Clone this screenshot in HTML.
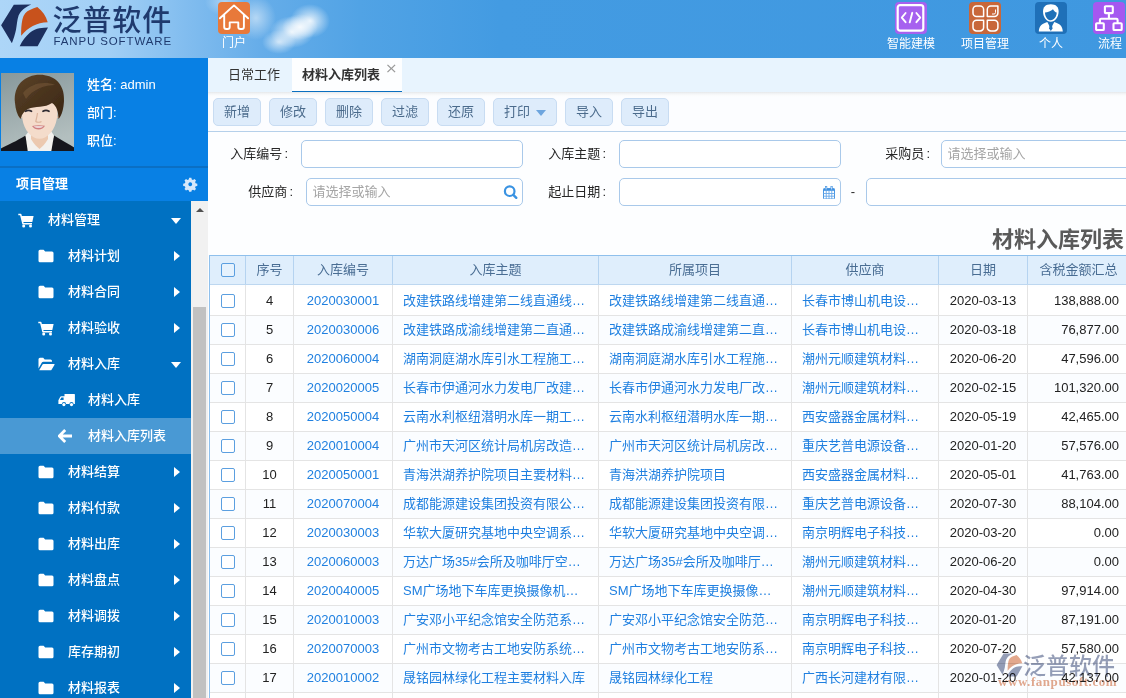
<!DOCTYPE html>
<html lang="zh-CN">
<head>
<meta charset="utf-8">
<title>材料入库列表</title>
<style>
*{box-sizing:border-box;margin:0;padding:0}
html,body{width:1126px;height:698px;overflow:hidden;background:#fdfeff;font-family:"Liberation Sans","Noto Sans CJK SC",sans-serif;font-size:13px;color:#333}
.abs{position:absolute}
#hdr{position:absolute;left:0;top:0;width:1126px;height:58px;background:linear-gradient(90deg,#add6f8 0,#a2cff5 110px,#82bdef 185px,#66ade9 260px,#51a3e5 360px,#439be2 500px,#3f98e0 100%);overflow:hidden}
#hdr .cloud{position:absolute;border-radius:50%;background:radial-gradient(closest-side,rgba(255,255,255,.85),rgba(255,255,255,0));}
.logo-cn{position:absolute;left:52.500px;top:2.500px;font-size:29px;line-height:36px;font-weight:500;color:#1f3a6e;letter-spacing:0.900px;white-space:nowrap}
.logo-en{position:absolute;left:53.500px;top:35px;font-size:11.5px;line-height:13px;color:#1f3a6e;letter-spacing:0.87px;white-space:nowrap}
.hicon{position:absolute;top:2px;width:32px;height:32px;border-radius:4px}
.hlbl{position:absolute;top:35.5px;height:15px;line-height:15px;font-size:12px;color:#fff;text-align:center;white-space:nowrap}
#side{position:absolute;left:0;top:58px;width:208px;height:640px;background:#0880e4}
#side .info{position:absolute;left:87px;font-weight:500;color:#fff;font-size:13px;line-height:16px;white-space:nowrap}
#menuhdr{position:absolute;left:0;top:108px;width:208px;height:35px;border-top:2px solid #0a6fc4;background:#0880e4}
#menuhdr b{position:absolute;left:16px;top:7px;font-size:13px;line-height:18px;color:#fff}
#menu{position:absolute;left:0;top:143px;width:191px;height:497px;background:#0071c2;overflow:hidden}
.mi{position:absolute;left:0;width:191px;height:36px;font-weight:500;color:#fff;font-size:13px;line-height:36px;white-space:nowrap}
.mi.sel{background:#4999d4}
.mi span{position:absolute;top:0}
.mi svg{position:absolute}
.arr-r{position:absolute;left:173.500px;top:13px;width:0;height:0;border-left:6.500px solid #fff;border-top:5px solid transparent;border-bottom:5px solid transparent}
.arr-d{position:absolute;left:171px;top:16px;width:0;height:0;border-top:6px solid #fff;border-left:5px solid transparent;border-right:5px solid transparent}
#sscroll{position:absolute;left:191px;top:143px;width:17px;height:497px;background:#f1f1f1}
#sscroll i{position:absolute;left:2px;top:106px;width:13px;height:400px;background:#c1c1c1}
#sscroll u{position:absolute;left:5px;top:7px;width:0;height:0;border-bottom:4px solid #505050;border-left:4px solid transparent;border-right:4px solid transparent}
#tabs{position:absolute;left:208px;top:58px;width:918px;height:34px;background:#e8f4fe}
#tabs .t1{position:absolute;left:20px;top:7.800px;font-size:13px;line-height:18px;color:#333}
#tabs .t2{position:absolute;left:84px;top:0;width:110px;height:34px;background:#fdfeff;border-bottom:1px solid #0a6fc0}
#tabs .t2 b{position:absolute;left:10px;top:7.800px;font-size:13px;line-height:18px;color:#333;white-space:nowrap}
#tabs .t2 em{position:absolute;left:93px;top:3.200px;font-style:normal;font-size:15px;line-height:16px;color:#999;font-family:"DejaVu Sans",sans-serif;font-weight:normal;transform:scale(1,.9)}
#tool{position:absolute;left:208px;top:92px;width:918px;height:40px;background:linear-gradient(180deg,#e6e8ea 0,#f1f3f5 1.500px,#f9fafb 3px,#fcfdff 5px,#fcfdff 100%);border-bottom:1px solid #b5d0ea}
.btn{position:absolute;top:6px;height:28px;width:48px;border:1px solid #c8dcf2;border-radius:5px;background:#deecfb;color:#4b6b8c;font-size:13px;line-height:26px;text-align:center;white-space:nowrap}
#form{position:absolute;left:208px;top:132px;width:918px;height:566px;background:#fdfeff}
.lbl i{font-style:normal;margin-left:2px}
.lbl{position:absolute;font-size:13px;line-height:18px;color:#262626;text-align:right;white-space:nowrap}
.inp{position:absolute;height:28px;border:1px solid #a9c9ea;border-radius:5px;background:#fff;font-size:13px;line-height:26px;color:#a5a5a5;padding-left:5.5px;white-space:nowrap;overflow:hidden}
#title{position:absolute;left:780px;top:222.600px;width:344px;text-align:right;font-size:22px;line-height:34px;font-weight:bold;color:#5a5a5a;white-space:nowrap}
#grid{position:absolute;left:209px;top:255px;width:930px;height:443px;border-left:1px solid #8fc0ec}
#ghead{position:absolute;left:0;top:0;width:930px;height:30px;background:#dfeefc;border-top:1px solid #8fc0ec;border-bottom:1px solid #bdd7f0}
.hc{position:absolute;top:0;height:28px;line-height:28px;text-align:center;color:#496d93;font-size:13px;border-right:1px solid #b5d3f0;white-space:nowrap}
.row{position:absolute;left:0;width:930px;height:29px;border-bottom:1px solid #e4e4e4;background:#fff}
.row.alt{background:#fbfdff}
.c{position:absolute;top:0;height:28px;line-height:27.500px;color:#222;border-right:1px solid #e4e4e4;font-size:13px;white-space:nowrap;overflow:hidden}
.c.ctr{text-align:center}
.c.lnk{color:#2080e0;padding-left:10px}
.c.lk{color:#2080e0}
.c.num{text-align:right;padding-right:10px}
.vl{position:absolute;top:30px;width:1px;height:2px;background:#e4e4e4}
.cb{position:absolute;left:11px;top:7px;width:14px;height:14px;border:1px solid #5b9fe0;border-radius:2px;background:#fff}
</style>
</head>
<body>
<div id="hdr">
  <div class="cloud" style="left:262px;top:30px;width:34px;height:24px;opacity:.8"></div>
  <div class="cloud" style="left:270px;top:16px;width:44px;height:32px"></div>
  <div class="cloud" style="left:290px;top:4px;width:40px;height:34px"></div>
  <div class="cloud" style="left:282px;top:14px;width:36px;height:26px"></div>
  <div class="cloud" style="left:236px;top:-4px;width:40px;height:44px;opacity:.6"></div>
  <div class="cloud" style="left:205px;top:-12px;width:40px;height:28px;opacity:.5"></div>
  <svg class="abs" style="left:0;top:0" width="52" height="52" viewBox="0 0 52 52">
    <path d="M1.100 25.300 L13.800 4.700 L31.300 4.500 C25 7 20.500 11 18.600 15.600 C17 20 17 25 16 29.800 C15 34.500 13.500 39 11.900 43.200 Z" fill="#1c2f5e"/>
    <path d="M37.300 7.100 C42.500 11 46 16 47.700 22.200 C37 22.500 27.500 27.500 21.200 35.800 C21 30 21.300 24.500 22.400 19.400 C23.500 14.500 26.500 11.500 29.800 10.100 C32.500 8.800 35 7.800 37.300 7.100 Z" fill="#c8521c"/>
    <path d="M48 27.600 L37.600 46.200 L19.700 46.200 C22.500 40.500 26 36 29.800 32.800 C33 30 36.500 28.600 39.500 28.200 C42.500 27.800 45.500 27.600 48 27.600 Z" fill="#1c2f5e"/>
  </svg>
  <div class="logo-cn">泛普软件</div>
  <div class="logo-en">FANPU SOFTWARE</div>

  <div class="hicon" style="left:218px;background:#e8793a"></div>
  <svg class="abs" style="left:218px;top:2px" width="32" height="32" viewBox="0 0 32 32"><path d="M1.900 16.300 L16 3.400 L30.100 16.300 M6.200 12.700 V25 a2 2 0 0 0 2 2 H9.700 a2 2 0 0 0 2 -2 V20.400 H20.300 V25 a2 2 0 0 0 2 2 H23.900 a2 2 0 0 0 2 -2 V12.700" fill="none" stroke="#fff" stroke-width="1.900" stroke-linejoin="round" stroke-linecap="round"/></svg>
  <div class="hlbl" style="left:214px;width:40px">门户</div>

  <div class="hicon" style="left:895px;background:#a661ef"></div>
  <svg class="abs" style="left:895px;top:2px" width="32" height="32" viewBox="0 0 32 32"><rect x="2.700" y="3.100" width="25.600" height="25.600" rx="2.500" fill="none" stroke="#fff" stroke-width="2.200"/><path d="M10.600 11 L6.800 15.600 L10.600 20.200 M21.400 11 L25.200 15.600 L21.400 20.200 M17.300 10.800 L14.700 20.400" fill="none" stroke="#fff" stroke-width="1.900" stroke-linecap="round" stroke-linejoin="round"/></svg>
  <div class="hlbl" style="left:881px;width:60px;top:36.5px">智能建模</div>

  <div class="hicon" style="left:969px;background:#c8673a"></div>
  <svg class="abs" style="left:969px;top:2px" width="32" height="32" viewBox="0 0 32 32"><g fill="none" stroke="#fff" stroke-width="1.500" stroke-linejoin="round"><path d="M14.600 14.600 H7.500 a3.500 3.500 0 0 1 -3.500 -3.500 V7.500 a3.500 3.500 0 0 1 3.500 -3.500 H11.100 a3.500 3.500 0 0 1 3.500 3.500z"/><path d="M18.300 14.600 H25.400 a3.500 3.500 0 0 0 3.500 -3.500 V4 H21.800 a3.500 3.500 0 0 0 -3.500 3.500z"/><path d="M14.600 18.300 H7.500 a3.500 3.500 0 0 0 -3.500 3.500 V25.400 a3.500 3.500 0 0 0 3.500 3.500 H11.100 a3.500 3.500 0 0 0 3.500 -3.500z"/><path d="M18.300 18.300 H25.400 a3.500 3.500 0 0 1 3.500 3.500 V25.400 a3.500 3.500 0 0 1 -3.500 3.500 H21.800 a3.500 3.500 0 0 1 -3.500 -3.500z"/><path d="M26.500 7.500 V10.500 a1.500 1.500 0 0 1 -1.500 1.500 H23" stroke-width="1"/></g></svg>
  <div class="hlbl" style="left:955px;width:60px;top:36.5px">项目管理</div>

  <div class="hicon" style="left:1035px;background:#1f70b8"></div>
  <svg class="abs" style="left:1035px;top:2px" width="32" height="32" viewBox="0 0 32 32"><path d="M15.800 2.200 C21 2.200 23.600 5 23.600 9.500 C23.600 15 20 19.800 15.800 19.800 C11.600 19.800 8 15 8 9.500 C8 5 10.600 2.200 15.800 2.200z" fill="#fff"/><path d="M10 10.500 C12.500 10.200 16 9 18 7.200 C19 9 20.500 10.200 21.700 10.600 C21.700 14.500 19 18.300 15.800 18.300 C12.600 18.300 10 14.500 10 10.500z" fill="#1f70b8"/><path d="M3.800 29.500 C4 24 7 21.500 12.300 19.900 L15.800 26.500 L19.300 19.900 C24.600 21.500 27.600 24 27.800 29.500z" fill="#fff"/><path d="M15 20.800 H16.600 L17.500 26.500 L15.800 29 L14.100 26.500z" fill="#1f70b8"/></svg>
  <div class="hlbl" style="left:1021px;width:60px;top:36.5px">个人</div>

  <div class="hicon" style="left:1093px;background:#a558f0"></div>
  <svg class="abs" style="left:1093px;top:2px" width="32" height="32" viewBox="0 0 32 32"><g fill="none" stroke="#fff" stroke-width="2.100"><rect x="11.900" y="4.300" width="7.900" height="6.800" rx="0.800"/><rect x="3.100" y="21.200" width="7.700" height="6.800" rx="0.800"/><rect x="20.500" y="21.200" width="8.200" height="6.800" rx="0.800"/><path d="M15.900 11.100 V16.800 M6.900 21.200 V18 a1.200 1.200 0 0 1 1.200 -1.200 H23.400 a1.200 1.200 0 0 1 1.200 1.200 V21.200"/></g></svg>
  <div class="hlbl" style="left:1080px;width:60px;top:36.5px">流程</div>
</div>

<div id="side">
  <svg class="abs" style="left:1px;top:15px" width="73" height="78" viewBox="0 0 73 78">
    <defs><linearGradient id="abg" x1="0" y1="0" x2="0.300" y2="1"><stop offset="0" stop-color="#87989b"/><stop offset="1" stop-color="#b3bfbf"/></linearGradient>
    <linearGradient id="hair" x1="0" y1="0" x2="1" y2="1"><stop offset="0" stop-color="#5b4228"/><stop offset=".5" stop-color="#4a341e"/><stop offset="1" stop-color="#3a2613"/></linearGradient>
    <filter id="sf" x="-5%" y="-5%" width="110%" height="110%"><feGaussianBlur stdDeviation="0.600"/></filter>
    <clipPath id="acp"><rect width="73" height="78"/></clipPath></defs>
    <rect width="73" height="78" fill="url(#abg)"/>
    <g filter="url(#sf)" clip-path="url(#acp)">
    <path d="M-1 76 C6 72 16 68 24.500 62.500 L30 80 L-1 80 Z" fill="#17181c"/>
    <path d="M74 75 C68 71 60 67 53 62.500 L47 80 L74 80 Z" fill="#17181c"/>
    <path d="M24.500 62.500 L28 58 L50 58 L53 62.500 L50 80 L27 80 Z" fill="#f3f1ee"/>
    <path d="M30 56 h17 v10 c-3 5 -6 8 -8.500 10 c-2.500 -2 -5.500 -5 -8.500 -10z" fill="#ecc9b0"/>
    <path d="M21 36 C20 50 25 60 33 64.500 C36.500 66.300 40.500 66.300 44 64.500 C52 60 57 50 56.500 36 C56 26 48 22 38.500 22 C29 22 21.500 26 21 36 Z" fill="#f4dccb"/>
    <path d="M18 38 c-1.500 1 -1 5 1 7 l2 0z M59 38 c1.500 1 1 5 -1 7 l-2 0z" fill="#e5c0a6"/>
    <path d="M14 30 C12 12 24 1.800 39 1.800 C52 1.800 64 10 63 28 C62.500 36 61 42 57.500 46 C57.500 40 56 33 51 30 C44 35 34 33 27 36 C23 38 21 41 19.500 46 C16 42 14.500 36 14 30 Z" fill="url(#hair)"/>
    <path d="M22 20 C30 10 44 8 54 12 C44 12 32 16 25 26 Z" fill="#6f5334" opacity=".7"/>
    <path d="M24.500 38.300 q3 -1.800 6 0 M42 38.300 q3 -1.800 6 0" stroke="#2d2a30" stroke-width="1.700" fill="none" stroke-linecap="round"/>
    <path d="M36.500 40 C36 44 35 47 34.800 48.500 C36 49.500 39 49.500 40.500 48.500" stroke="#dcb49c" stroke-width="1.200" fill="none"/>
    <path d="M31 53 C35 52 40 52 44 52.800 C42 57.500 34 58 31 53 Z" fill="#cf7f80"/>
    <path d="M32.500 53.600 C36 53 39.500 53 42.500 53.500 C40.500 55.200 35 55.300 32.500 53.600z" fill="#f6eeee"/>
    </g>
  </svg>
  <div class="info" style="top:19px">姓名: admin</div>
  <div class="info" style="top:47px">部门:</div>
  <div class="info" style="top:75px">职位:</div>
  <div id="menuhdr"><b>项目管理</b>
    <svg class="abs" style="left:183px;top:9px" width="14.500" height="14.500" viewBox="0 0 16 16"><path d="M8 0.800 l1.200 0 l0.500 1.900 l1.300 0.550 l1.700 -1 l1.650 1.650 l-1 1.700 l0.550 1.300 l1.900 0.500 l0 2.400 l-1.900 0.500 l-0.550 1.300 l1 1.700 l-1.650 1.650 l-1.700 -1 l-1.300 0.550 l-0.500 1.900 l-2.400 0 l-0.500 -1.900 l-1.300 -0.550 l-1.700 1 l-1.650 -1.650 l1 -1.700 l-0.550 -1.300 l-1.900 -0.500 l0 -2.400 l1.900 -0.500 l0.550 -1.300 l-1 -1.700 l1.650 -1.650 l1.700 1 l1.300 -0.550 l0.500 -1.900z M8 5.900 a2.100 2.100 0 1 0 0.010 0z" fill="#d6e8fb" fill-rule="evenodd"/></svg>
  </div>
  <div id="menu">
    <div class="mi" style="top:1px"><svg style="left:18px;top:11px" width="16" height="15" viewBox="0 0 16 15"><path d="M0.300 1.500 H2.700 L5 10.700 H14" fill="none" stroke="#fff" stroke-width="1.500" stroke-linejoin="round"/><path d="M3.300 2.900 H15.600 L14.300 8.900 H4.700z" fill="#fff"/><circle cx="5.700" cy="13" r="1.500" fill="#fff"/><circle cx="12.500" cy="13" r="1.500" fill="#fff"/></svg><span style="left:48px">材料管理</span><i class="arr-d"></i></div>
    <div class="mi" style="top:37px"><svg style="left:38px;top:11px" width="16" height="14" viewBox="0 0 16 14"><path d="M0.5 2.2 a1.5 1.5 0 0 1 1.5 -1.5 h3.600 l1.600 1.900 h6.800 a1.500 1.500 0 0 1 1.500 1.500 v7.700 a1.500 1.500 0 0 1 -1.500 1.500 h-12 a1.500 1.500 0 0 1 -1.500 -1.500z" fill="#fff"/></svg><span style="left:68px">材料计划</span><i class="arr-r"></i></div>
    <div class="mi" style="top:73px"><svg style="left:38px;top:11px" width="16" height="14" viewBox="0 0 16 14"><path d="M0.5 2.2 a1.5 1.5 0 0 1 1.5 -1.5 h3.600 l1.600 1.900 h6.800 a1.500 1.500 0 0 1 1.500 1.500 v7.700 a1.500 1.500 0 0 1 -1.500 1.500 h-12 a1.500 1.500 0 0 1 -1.500 -1.500z" fill="#fff"/></svg><span style="left:68px">材料合同</span><i class="arr-r"></i></div>
    <div class="mi" style="top:109px"><svg style="left:38px;top:11px" width="16" height="15" viewBox="0 0 16 15"><path d="M0.300 1.500 H2.700 L5 10.700 H14" fill="none" stroke="#fff" stroke-width="1.500" stroke-linejoin="round"/><path d="M3.300 2.900 H15.600 L14.300 8.900 H4.700z" fill="#fff"/><circle cx="5.700" cy="13" r="1.500" fill="#fff"/><circle cx="12.500" cy="13" r="1.500" fill="#fff"/></svg><span style="left:68px">材料验收</span><i class="arr-r"></i></div>
    <div class="mi" style="top:145px"><svg style="left:38px;top:11px" width="17" height="14" viewBox="0 0 17 14"><path d="M0.500 2.200 a1.500 1.500 0 0 1 1.500 -1.500 h3.200 l1.500 1.700 h5.800 a1.500 1.500 0 0 1 1.500 1.500 v0.800 h-8.500 a2 2 0 0 0 -1.800 1.100 l-3.200 5.600z" fill="#fff"/><path d="M1.200 13.300 l3.300 -5.800 a1.200 1.200 0 0 1 1 -0.600 h10.600 a0.500 0.500 0 0 1 0.450 0.750 l-3 5.100 a1.200 1.200 0 0 1 -1 0.550z" fill="#fff"/></svg><span style="left:68px">材料入库</span><i class="arr-d"></i></div>
    <div class="mi" style="top:181px"><svg style="left:58px;top:11px" width="17" height="14" viewBox="0 0 17 14"><path d="M6.500 1 h9.800 a0.600 0.600 0 0 1 0.600 0.600 v9.400 h-1.300 a2.100 2.100 0 0 0 -4.200 0 h-3.300 a2.100 2.100 0 0 0 -4.200 0 h-3.500 v-3.800 l1.900 -3.400 a1 1 0 0 1 0.900 -0.500 h3.300z M2 7 h3.600 v-2.600 h-2.200z" fill="#fff" fill-rule="evenodd"/><circle cx="5.900" cy="11.600" r="1.600" fill="#fff"/><circle cx="13.500" cy="11.600" r="1.600" fill="#fff"/></svg><span style="left:88px">材料入库</span></div>
    <div class="mi sel" style="top:217px"><svg style="left:58px;top:11px" width="15" height="14" viewBox="0 0 15 14"><path d="M7.200 1 L1.200 7 L7.200 13 M1.800 7 H14" fill="none" stroke="#fff" stroke-width="2.800" stroke-linejoin="miter"/></svg><span style="left:88px">材料入库列表</span></div>
    <div class="mi" style="top:253px"><svg style="left:38px;top:11px" width="16" height="14" viewBox="0 0 16 14"><path d="M0.5 2.2 a1.5 1.5 0 0 1 1.5 -1.5 h3.600 l1.600 1.900 h6.800 a1.500 1.500 0 0 1 1.500 1.500 v7.700 a1.500 1.500 0 0 1 -1.500 1.500 h-12 a1.500 1.500 0 0 1 -1.500 -1.500z" fill="#fff"/></svg><span style="left:68px">材料结算</span><i class="arr-r"></i></div>
    <div class="mi" style="top:289px"><svg style="left:38px;top:11px" width="16" height="14" viewBox="0 0 16 14"><path d="M0.5 2.2 a1.5 1.5 0 0 1 1.5 -1.5 h3.600 l1.600 1.900 h6.800 a1.500 1.500 0 0 1 1.500 1.500 v7.700 a1.500 1.500 0 0 1 -1.500 1.500 h-12 a1.500 1.500 0 0 1 -1.500 -1.500z" fill="#fff"/></svg><span style="left:68px">材料付款</span><i class="arr-r"></i></div>
    <div class="mi" style="top:325px"><svg style="left:38px;top:11px" width="16" height="14" viewBox="0 0 16 14"><path d="M0.5 2.2 a1.5 1.5 0 0 1 1.5 -1.5 h3.600 l1.600 1.900 h6.800 a1.500 1.500 0 0 1 1.500 1.500 v7.700 a1.500 1.500 0 0 1 -1.500 1.500 h-12 a1.500 1.500 0 0 1 -1.500 -1.500z" fill="#fff"/></svg><span style="left:68px">材料出库</span><i class="arr-r"></i></div>
    <div class="mi" style="top:361px"><svg style="left:38px;top:11px" width="16" height="14" viewBox="0 0 16 14"><path d="M0.5 2.2 a1.5 1.5 0 0 1 1.5 -1.5 h3.600 l1.600 1.900 h6.800 a1.500 1.500 0 0 1 1.500 1.500 v7.700 a1.500 1.500 0 0 1 -1.500 1.500 h-12 a1.500 1.500 0 0 1 -1.500 -1.500z" fill="#fff"/></svg><span style="left:68px">材料盘点</span><i class="arr-r"></i></div>
    <div class="mi" style="top:397px"><svg style="left:38px;top:11px" width="16" height="14" viewBox="0 0 16 14"><path d="M0.5 2.2 a1.5 1.5 0 0 1 1.5 -1.5 h3.600 l1.600 1.900 h6.800 a1.500 1.500 0 0 1 1.500 1.500 v7.700 a1.500 1.500 0 0 1 -1.500 1.500 h-12 a1.500 1.500 0 0 1 -1.500 -1.500z" fill="#fff"/></svg><span style="left:68px">材料调拨</span><i class="arr-r"></i></div>
    <div class="mi" style="top:433px"><svg style="left:38px;top:11px" width="16" height="14" viewBox="0 0 16 14"><path d="M0.5 2.2 a1.5 1.5 0 0 1 1.5 -1.5 h3.600 l1.600 1.900 h6.800 a1.500 1.500 0 0 1 1.500 1.500 v7.700 a1.500 1.500 0 0 1 -1.500 1.500 h-12 a1.500 1.500 0 0 1 -1.500 -1.500z" fill="#fff"/></svg><span style="left:68px">库存期初</span><i class="arr-r"></i></div>
    <div class="mi" style="top:469px"><svg style="left:38px;top:11px" width="16" height="14" viewBox="0 0 16 14"><path d="M0.5 2.2 a1.5 1.5 0 0 1 1.5 -1.5 h3.600 l1.600 1.900 h6.800 a1.500 1.500 0 0 1 1.500 1.500 v7.700 a1.500 1.500 0 0 1 -1.500 1.500 h-12 a1.500 1.500 0 0 1 -1.500 -1.500z" fill="#fff"/></svg><span style="left:68px">材料报表</span><i class="arr-r"></i></div>
  </div>
  <div id="sscroll"><u></u><i></i></div>
</div>

<div id="tabs">
  <div class="t1">日常工作</div>
  <div class="t2"><b>材料入库列表</b><em>×</em></div>
</div>
<div id="tool">
  <div class="btn" style="left:5px">新增</div>
  <div class="btn" style="left:61px">修改</div>
  <div class="btn" style="left:117px">删除</div>
  <div class="btn" style="left:173px">过滤</div>
  <div class="btn" style="left:229px">还原</div>
  <div class="btn" style="left:285px;width:64px;text-align:left;padding-left:10px">打印<i style="position:absolute;left:41.500px;top:10.500px;width:0;height:0;border-top:6px solid #6da5de;border-left:5px solid transparent;border-right:5px solid transparent"></i></div>
  <div class="btn" style="left:357px">导入</div>
  <div class="btn" style="left:413px">导出</div>
</div>
<div id="form">
  <div class="lbl" style="left:0;width:80px;top:12.600px">入库编号<i>:</i></div>
  <div class="inp" style="left:93px;top:8px;width:222px"></div>
  <div class="lbl" style="left:0;width:85px;top:50.600px">供应商<i>:</i></div>
  <div class="inp" style="left:98px;top:46px;width:217px">请选择或输入
    <svg class="abs" style="left:196px;top:6px" width="15" height="15" viewBox="0 0 15 15"><circle cx="6.700" cy="6.200" r="4.800" fill="none" stroke="#3a93e2" stroke-width="2.200"/><path d="M10.300 9.800 L13.300 12.800" stroke="#3a93e2" stroke-width="2.400" stroke-linecap="round"/></svg>
  </div>
  <div class="lbl" style="left:318px;width:80px;top:12.600px">入库主题<i>:</i></div>
  <div class="inp" style="left:411px;top:8px;width:222px"></div>
  <div class="lbl" style="left:318px;width:80px;top:50.600px">起止日期<i>:</i></div>
  <div class="inp" style="left:411px;top:46px;width:222px">
    <svg class="abs" style="left:203px;top:6.700px" width="12" height="13.500" viewBox="0 0 12 13.500"><rect x="0.500" y="2.600" width="11" height="10.400" rx="0.800" fill="#fff" stroke="#4a97e2" stroke-width="1"/><rect x="0.500" y="2.600" width="11" height="2.200" fill="#3e8fe0"/><path d="M3.200 7.600 v-0 M0.500 7.500 h11 M0.500 10.200 h11 M3.250 4.800 v8.200 M6 4.800 v8.200 M8.750 4.800 v8.200" stroke="#6aa9ea" stroke-width=".9" fill="none"/><path d="M3.100 0.600 v2.600 M8.600 0.600 v2.600" stroke="#4a97e2" stroke-width="2.200" stroke-linecap="round"/><path d="M3.100 1 v2 M8.600 1 v2" stroke="#e8f2fd" stroke-width=".8" stroke-linecap="round"/></svg>
  </div>
  <div class="lbl" style="left:640px;top:51px;width:10px;text-align:center">-</div>
  <div class="inp" style="left:658px;top:46px;width:300px"></div>
  <div class="lbl" style="left:642px;width:80px;top:12.600px">采购员<i>:</i></div>
  <div class="inp" style="left:733px;top:8px;width:230px">请选择或输入</div>
</div>
<div id="title">材料入库列表</div>
<div id="grid">
  <div id="ghead">
    <div class="hc" style="left:0px;width:36px"><i class="cb" style="background:#e6f2fd"></i></div>
    <div class="hc" style="left:36px;width:48px">序号</div>
    <div class="hc" style="left:84px;width:99px">入库编号</div>
    <div class="hc" style="left:183px;width:206px">入库主题</div>
    <div class="hc" style="left:389px;width:193px">所属项目</div>
    <div class="hc" style="left:582px;width:147px">供应商</div>
    <div class="hc" style="left:729px;width:89px">日期</div>
    <div class="hc" style="left:818px;width:102px">含税金额汇总</div>
  </div>
  <div class="row" style="top:32px"><div class="c" style="left:0px;width:36px"><i class="cb"></i></div><div class="c ctr" style="left:36px;width:48px">4</div><div class="c ctr lk" style="left:84px;width:99px">2020030001</div><div class="c lnk" style="left:183px;width:206px">改建铁路线增建第二线直通线…</div><div class="c lnk" style="left:389px;width:193px">改建铁路线增建第二线直通…</div><div class="c lnk" style="left:582px;width:147px">长春市博山机电设…</div><div class="c ctr" style="left:729px;width:89px">2020-03-13</div><div class="c num" style="left:818px;width:102px">138,888.00</div></div>
  <div class="row alt" style="top:61px"><div class="c" style="left:0px;width:36px"><i class="cb"></i></div><div class="c ctr" style="left:36px;width:48px">5</div><div class="c ctr lk" style="left:84px;width:99px">2020030006</div><div class="c lnk" style="left:183px;width:206px">改建铁路成渝线增建第二直通…</div><div class="c lnk" style="left:389px;width:193px">改建铁路成渝线增建第二直…</div><div class="c lnk" style="left:582px;width:147px">长春市博山机电设…</div><div class="c ctr" style="left:729px;width:89px">2020-03-18</div><div class="c num" style="left:818px;width:102px">76,877.00</div></div>
  <div class="row" style="top:90px"><div class="c" style="left:0px;width:36px"><i class="cb"></i></div><div class="c ctr" style="left:36px;width:48px">6</div><div class="c ctr lk" style="left:84px;width:99px">2020060004</div><div class="c lnk" style="left:183px;width:206px">湖南洞庭湖水库引水工程施工…</div><div class="c lnk" style="left:389px;width:193px">湖南洞庭湖水库引水工程施…</div><div class="c lnk" style="left:582px;width:147px">潮州元顺建筑材料…</div><div class="c ctr" style="left:729px;width:89px">2020-06-20</div><div class="c num" style="left:818px;width:102px">47,596.00</div></div>
  <div class="row alt" style="top:119px"><div class="c" style="left:0px;width:36px"><i class="cb"></i></div><div class="c ctr" style="left:36px;width:48px">7</div><div class="c ctr lk" style="left:84px;width:99px">2020020005</div><div class="c lnk" style="left:183px;width:206px">长春市伊通河水力发电厂改建…</div><div class="c lnk" style="left:389px;width:193px">长春市伊通河水力发电厂改…</div><div class="c lnk" style="left:582px;width:147px">潮州元顺建筑材料…</div><div class="c ctr" style="left:729px;width:89px">2020-02-15</div><div class="c num" style="left:818px;width:102px">101,320.00</div></div>
  <div class="row" style="top:148px"><div class="c" style="left:0px;width:36px"><i class="cb"></i></div><div class="c ctr" style="left:36px;width:48px">8</div><div class="c ctr lk" style="left:84px;width:99px">2020050004</div><div class="c lnk" style="left:183px;width:206px">云南水利枢纽潜明水库一期工…</div><div class="c lnk" style="left:389px;width:193px">云南水利枢纽潜明水库一期…</div><div class="c lnk" style="left:582px;width:147px">西安盛器金属材料…</div><div class="c ctr" style="left:729px;width:89px">2020-05-19</div><div class="c num" style="left:818px;width:102px">42,465.00</div></div>
  <div class="row alt" style="top:177px"><div class="c" style="left:0px;width:36px"><i class="cb"></i></div><div class="c ctr" style="left:36px;width:48px">9</div><div class="c ctr lk" style="left:84px;width:99px">2020010004</div><div class="c lnk" style="left:183px;width:206px">广州市天河区统计局机房改造…</div><div class="c lnk" style="left:389px;width:193px">广州市天河区统计局机房改…</div><div class="c lnk" style="left:582px;width:147px">重庆艺普电源设备…</div><div class="c ctr" style="left:729px;width:89px">2020-01-20</div><div class="c num" style="left:818px;width:102px">57,576.00</div></div>
  <div class="row" style="top:206px"><div class="c" style="left:0px;width:36px"><i class="cb"></i></div><div class="c ctr" style="left:36px;width:48px">10</div><div class="c ctr lk" style="left:84px;width:99px">2020050001</div><div class="c lnk" style="left:183px;width:206px">青海洪湖养护院项目主要材料…</div><div class="c lnk" style="left:389px;width:193px">青海洪湖养护院项目</div><div class="c lnk" style="left:582px;width:147px">西安盛器金属材料…</div><div class="c ctr" style="left:729px;width:89px">2020-05-01</div><div class="c num" style="left:818px;width:102px">41,763.00</div></div>
  <div class="row alt" style="top:235px"><div class="c" style="left:0px;width:36px"><i class="cb"></i></div><div class="c ctr" style="left:36px;width:48px">11</div><div class="c ctr lk" style="left:84px;width:99px">2020070004</div><div class="c lnk" style="left:183px;width:206px">成都能源建设集团投资有限公…</div><div class="c lnk" style="left:389px;width:193px">成都能源建设集团投资有限…</div><div class="c lnk" style="left:582px;width:147px">重庆艺普电源设备…</div><div class="c ctr" style="left:729px;width:89px">2020-07-30</div><div class="c num" style="left:818px;width:102px">88,104.00</div></div>
  <div class="row" style="top:264px"><div class="c" style="left:0px;width:36px"><i class="cb"></i></div><div class="c ctr" style="left:36px;width:48px">12</div><div class="c ctr lk" style="left:84px;width:99px">2020030003</div><div class="c lnk" style="left:183px;width:206px">华软大厦研究基地中央空调系…</div><div class="c lnk" style="left:389px;width:193px">华软大厦研究基地中央空调…</div><div class="c lnk" style="left:582px;width:147px">南京明辉电子科技…</div><div class="c ctr" style="left:729px;width:89px">2020-03-20</div><div class="c num" style="left:818px;width:102px">0.00</div></div>
  <div class="row alt" style="top:293px"><div class="c" style="left:0px;width:36px"><i class="cb"></i></div><div class="c ctr" style="left:36px;width:48px">13</div><div class="c ctr lk" style="left:84px;width:99px">2020060003</div><div class="c lnk" style="left:183px;width:206px">万达广场35#会所及咖啡厅空…</div><div class="c lnk" style="left:389px;width:193px">万达广场35#会所及咖啡厅…</div><div class="c lnk" style="left:582px;width:147px">潮州元顺建筑材料…</div><div class="c ctr" style="left:729px;width:89px">2020-06-20</div><div class="c num" style="left:818px;width:102px">0.00</div></div>
  <div class="row" style="top:322px"><div class="c" style="left:0px;width:36px"><i class="cb"></i></div><div class="c ctr" style="left:36px;width:48px">14</div><div class="c ctr lk" style="left:84px;width:99px">2020040005</div><div class="c lnk" style="left:183px;width:206px">SM广场地下车库更换摄像机…</div><div class="c lnk" style="left:389px;width:193px">SM广场地下车库更换摄像…</div><div class="c lnk" style="left:582px;width:147px">潮州元顺建筑材料…</div><div class="c ctr" style="left:729px;width:89px">2020-04-30</div><div class="c num" style="left:818px;width:102px">97,914.00</div></div>
  <div class="row alt" style="top:351px"><div class="c" style="left:0px;width:36px"><i class="cb"></i></div><div class="c ctr" style="left:36px;width:48px">15</div><div class="c ctr lk" style="left:84px;width:99px">2020010003</div><div class="c lnk" style="left:183px;width:206px">广安邓小平纪念馆安全防范系…</div><div class="c lnk" style="left:389px;width:193px">广安邓小平纪念馆安全防范…</div><div class="c lnk" style="left:582px;width:147px">南京明辉电子科技…</div><div class="c ctr" style="left:729px;width:89px">2020-01-20</div><div class="c num" style="left:818px;width:102px">87,191.00</div></div>
  <div class="row" style="top:380px"><div class="c" style="left:0px;width:36px"><i class="cb"></i></div><div class="c ctr" style="left:36px;width:48px">16</div><div class="c ctr lk" style="left:84px;width:99px">2020070003</div><div class="c lnk" style="left:183px;width:206px">广州市文物考古工地安防系统…</div><div class="c lnk" style="left:389px;width:193px">广州市文物考古工地安防系…</div><div class="c lnk" style="left:582px;width:147px">南京明辉电子科技…</div><div class="c ctr" style="left:729px;width:89px">2020-07-20</div><div class="c num" style="left:818px;width:102px">57,580.00</div></div>
  <div class="row alt" style="top:409px"><div class="c" style="left:0px;width:36px"><i class="cb"></i></div><div class="c ctr" style="left:36px;width:48px">17</div><div class="c ctr lk" style="left:84px;width:99px">2020010002</div><div class="c lnk" style="left:183px;width:206px">晟铭园林绿化工程主要材料入库</div><div class="c lnk" style="left:389px;width:193px">晟铭园林绿化工程</div><div class="c lnk" style="left:582px;width:147px">广西长河建材有限…</div><div class="c ctr" style="left:729px;width:89px">2020-01-20</div><div class="c num" style="left:818px;width:102px">42,137.00</div></div>
  <div class="row" style="top:438px"><div class="c" style="left:0px;width:36px"></div><div class="c ctr" style="left:36px;width:48px"></div><div class="c ctr lk" style="left:84px;width:99px"></div><div class="c lnk" style="left:183px;width:206px"></div><div class="c lnk" style="left:389px;width:193px"></div><div class="c lnk" style="left:582px;width:147px"></div><div class="c ctr" style="left:729px;width:89px"></div><div class="c num" style="left:818px;width:102px"></div></div>
  <i class="vl" style="left:35px"></i><i class="vl" style="left:83px"></i><i class="vl" style="left:182px"></i><i class="vl" style="left:388px"></i><i class="vl" style="left:581px"></i><i class="vl" style="left:728px"></i><i class="vl" style="left:817px"></i><i class="vl" style="left:919px"></i>
</div>
<div id="wm" style="position:absolute;left:990px;top:645px;width:136px;height:50px;opacity:.5;mix-blend-mode:multiply;pointer-events:none">
  <svg class="abs" style="left:5.500px;top:6.200px" width="28.600" height="28.600" viewBox="0 0 52 52">
    <path d="M1.100 25.300 L13.800 4.700 L31.300 4.500 C25 7 20.500 11 18.600 15.600 C17 20 17 25 16 29.800 C15 34.500 13.500 39 11.900 43.200 Z" fill="#2a3c6e"/>
    <path d="M37.300 7.100 C42.500 11 46 16 47.700 22.200 C37 22.500 27.500 27.500 21.200 35.800 C21 30 21.300 24.500 22.400 19.400 C23.500 14.500 26.500 11.500 29.800 10.100 C32.500 8.800 35 7.800 37.300 7.100 Z" fill="#c8521c"/>
    <path d="M48 27.600 L37.600 46.200 L19.700 46.200 C22.500 40.500 26 36 29.800 32.800 C33 30 36.500 28.600 39.500 28.200 C42.500 27.800 45.500 27.600 48 27.600 Z" fill="#2a3c6e"/>
  </svg>
  <div style="position:absolute;left:33px;top:5px;font-size:23px;line-height:32px;font-weight:500;color:#2a3c6e;white-space:nowrap">泛普软件</div>
  <div style="position:absolute;left:8px;top:30px;font-family:'Liberation Serif',serif;font-size:13px;line-height:14px;font-weight:bold;color:#c8521c;letter-spacing:.55px;white-space:nowrap">www.fanpusoft.com</div>
</div>
</body>
</html>
